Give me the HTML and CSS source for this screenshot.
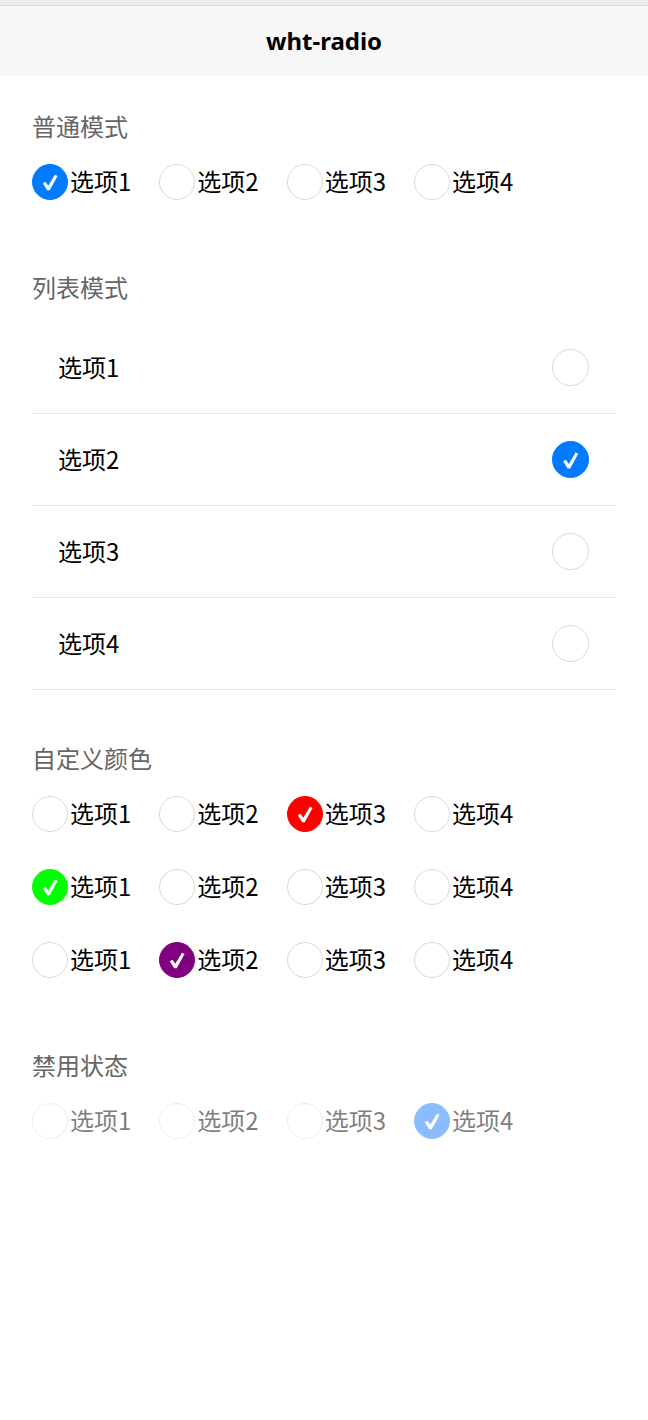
FILE: index.html
```html
<!DOCTYPE html>
<html lang="zh-CN">
<head>
<meta charset="utf-8">
<title>wht-radio</title>
<link rel="stylesheet" href="styles.css">
</head>
<body>
<div class="topbar"></div>
<div class="navbar"><span class="navbar-title">wht-radio</span></div>
<main class="content">
  <section class="section section-first">
    <h2 class="section-title">普通模式</h2>
    <div class="radio-group">
      <div class="radio checked"><span class="radio-circle"><svg viewBox="0 0 36 36"><path d="M10.4 19.4 L13.2 17.7 L16.2 22 L23.2 10.2 L26 11.6 L17.7 26.8 L15 26.8 Z"/></svg></span><span class="radio-label">选项1</span></div>
      <div class="radio"><span class="radio-circle"></span><span class="radio-label">选项2</span></div>
      <div class="radio"><span class="radio-circle"></span><span class="radio-label">选项3</span></div>
      <div class="radio"><span class="radio-circle"></span><span class="radio-label">选项4</span></div>
    </div>
  </section>

  <section class="section section-list">
    <h2 class="section-title">列表模式</h2>
    <div class="radio-list">
      <div class="list-item"><span class="list-label">选项1</span><span class="radio-circle"></span></div>
      <div class="list-item checked"><span class="list-label">选项2</span><span class="radio-circle"><svg viewBox="0 0 36 36"><path d="M10.4 19.4 L13.2 17.7 L16.2 22 L23.2 10.2 L26 11.6 L17.7 26.8 L15 26.8 Z"/></svg></span></div>
      <div class="list-item"><span class="list-label">选项3</span><span class="radio-circle"></span></div>
      <div class="list-item"><span class="list-label">选项4</span><span class="radio-circle"></span></div>
    </div>
  </section>

  <section class="section section-after-list">
    <h2 class="section-title">自定义颜色</h2>
    <div class="radio-group">
      <div class="radio"><span class="radio-circle"></span><span class="radio-label">选项1</span></div>
      <div class="radio"><span class="radio-circle"></span><span class="radio-label">选项2</span></div>
      <div class="radio checked c-red"><span class="radio-circle"><svg viewBox="0 0 36 36"><path d="M10.4 19.4 L13.2 17.7 L16.2 22 L23.2 10.2 L26 11.6 L17.7 26.8 L15 26.8 Z"/></svg></span><span class="radio-label">选项3</span></div>
      <div class="radio"><span class="radio-circle"></span><span class="radio-label">选项4</span></div>
    </div>
    <div class="radio-group group-next">
      <div class="radio checked c-green"><span class="radio-circle"><svg viewBox="0 0 36 36"><path d="M10.4 19.4 L13.2 17.7 L16.2 22 L23.2 10.2 L26 11.6 L17.7 26.8 L15 26.8 Z"/></svg></span><span class="radio-label">选项1</span></div>
      <div class="radio"><span class="radio-circle"></span><span class="radio-label">选项2</span></div>
      <div class="radio"><span class="radio-circle"></span><span class="radio-label">选项3</span></div>
      <div class="radio"><span class="radio-circle"></span><span class="radio-label">选项4</span></div>
    </div>
    <div class="radio-group group-next">
      <div class="radio"><span class="radio-circle"></span><span class="radio-label">选项1</span></div>
      <div class="radio checked c-purple"><span class="radio-circle"><svg viewBox="0 0 36 36"><path d="M10.4 19.4 L13.2 17.7 L16.2 22 L23.2 10.2 L26 11.6 L17.7 26.8 L15 26.8 Z"/></svg></span><span class="radio-label">选项2</span></div>
      <div class="radio"><span class="radio-circle"></span><span class="radio-label">选项3</span></div>
      <div class="radio"><span class="radio-circle"></span><span class="radio-label">选项4</span></div>
    </div>
  </section>

  <section class="section">
    <h2 class="section-title">禁用状态</h2>
    <div class="radio-group disabled">
      <div class="radio"><span class="radio-circle"></span><span class="radio-label">选项1</span></div>
      <div class="radio"><span class="radio-circle"></span><span class="radio-label">选项2</span></div>
      <div class="radio"><span class="radio-circle"></span><span class="radio-label">选项3</span></div>
      <div class="radio checked"><span class="radio-circle"><svg viewBox="0 0 36 36"><path d="M10.4 19.4 L13.2 17.7 L16.2 22 L23.2 10.2 L26 11.6 L17.7 26.8 L15 26.8 Z"/></svg></span><span class="radio-label">选项4</span></div>
    </div>
  </section>
</main>
</body>
</html>
```

FILE: styles.css
```css
* { box-sizing: border-box; }

html, body {
  margin: 0;
  padding: 0;
  background: #ffffff;
  font-family: "Noto Sans CJK SC", "Noto Sans", sans-serif;
  color: #000000;
}

.topbar {
  height: 6px;
  background: #ececf0;
  border-bottom: 1px solid #d6d6de;
}

.navbar {
  height: 70px;
  padding-bottom: 2px;
  background: #f7f7f7;
  display: flex;
  align-items: center;
  justify-content: center;
}

.navbar-title {
  font-family: "Noto Sans", "Liberation Sans", sans-serif;
  font-weight: 700;
  font-size: 24px;
  color: #000;
}

.content {
  padding: 37px 32px 0;
}

.section + .section { margin-top: 72px; }
.section.section-after-list { margin-top: 55px; }

.section-title {
  margin: 0;
  font-size: 24px;
  font-weight: 400;
  line-height: 26px;
  padding-bottom: 4px;
  color: #666666;
}

.radio-group {
  margin-top: 19px;
  display: flex;
  align-items: center;
  height: 40px;
}

.radio-group.group-next { margin-top: 33px; }

.radio {
  display: flex;
  align-items: center;
  margin-right: 28px;
}

.radio-circle {
  width: 36px;
  height: 36px;
  border-radius: 50%;
  border: 1px solid #d9d9d9;
  background: #ffffff;
  display: flex;
  align-items: center;
  justify-content: center;
  flex-shrink: 0;
}

.radio-circle svg {
  width: 36px;
  height: 36px;
  fill: #ffffff;
}

.checked .radio-circle {
  background: #007aff;
  border-color: #007aff;
}

.radio.c-red .radio-circle { background: #ff0000; border-color: #ff0000; }
.radio.c-green .radio-circle { background: #00ff00; border-color: #00ff00; }
.radio.c-purple .radio-circle { background: #800080; border-color: #800080; }

.radio-label {
  margin-left: 2px;
  font-size: 24px;
  line-height: 28px;
  padding-bottom: 2px;
}

.disabled .radio { opacity: 0.5; }
.disabled .radio .radio-circle { border-color: #dcdcdc; }
.disabled .radio.checked .radio-circle { background: #1a7cff; border-color: #1a7cff; }

.radio-list {
  margin-top: 18px;
}

.list-item {
  height: 92px;
  border-bottom: 1px solid #e8e8e8;
  display: flex;
  align-items: center;
  justify-content: space-between;
  padding: 0 27px 0 26px;
}

.list-item .radio-circle {
  width: 37px;
  height: 37px;
}

.list-label {
  font-size: 24px;
  line-height: 28px;
  padding-bottom: 2px;
}
```
